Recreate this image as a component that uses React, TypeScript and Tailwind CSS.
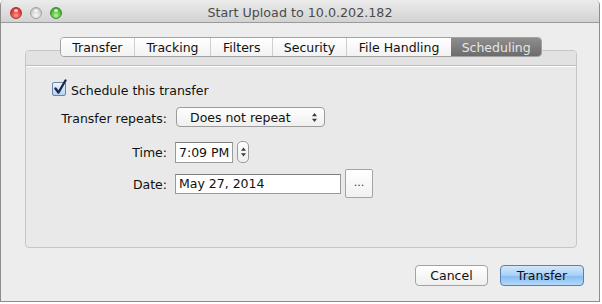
import React from "react";

const tabs = [
  { label: "Transfer", w: "w-[73px]" },
  { label: "Tracking", w: "w-[77px]" },
  { label: "Filters", w: "w-[62px]" },
  { label: "Security", w: "w-[74px]" },
  { label: "File Handling", w: "w-[106px]" },
  { label: "Scheduling", w: "w-[90px]", active: true },
];

function TrafficLight({ color }: { color: "red" | "gray" | "green" }) {
  const styles = {
    red: "bg-[radial-gradient(circle_at_50%_75%,#ff9a94_0%,#ec4c45_45%,#c0231d_100%)] border-[#a3302b]",
    gray: "bg-[radial-gradient(circle_at_50%_75%,#f8f8f8_0%,#dadada_45%,#b4b4b4_100%)] border-[#a2a2a2]",
    green: "bg-[radial-gradient(circle_at_50%_75%,#b9f5a2_0%,#5fc645_45%,#2f8f20_100%)] border-[#3f8a30]",
  };
  return (
    <div className={`relative w-[12px] h-[12px] rounded-full border ${styles[color]}`}>
      <div className="absolute left-[3px] top-[1px] w-[4px] h-[3px] rounded-full bg-white/70" />
    </div>
  );
}

function Checkbox() {
  return (
    <div className="relative w-[14px] h-[14px]">
      <div className="w-[14px] h-[14px] rounded-[2px] border border-[#6b84a8] bg-[linear-gradient(#eef5fe,#b4d2f2)]" />
      <svg className="absolute left-[1px] -top-[3px]" width="15" height="16" viewBox="0 0 15 16">
        <path d="M2.5 9.5 L5.5 13.5 L12.5 1.5" fill="none" stroke="#1c2a48" strokeWidth="2.4" strokeLinecap="round" strokeLinejoin="round" />
      </svg>
    </div>
  );
}

function UpDown({ h = 11 }: { h?: number }) {
  return (
    <svg width="7" height={h} viewBox="0 0 7 11">
      <path d="M3.5 1 L6 4.2 L1 4.2 Z" fill="#3a3a3a" />
      <path d="M3.5 10 L6 6.8 L1 6.8 Z" fill="#3a3a3a" />
    </svg>
  );
}

export default function App() {
  return (
    <div className="w-[602px] h-[304px] bg-white font-['DejaVu_Sans',sans-serif] text-[12.5px] text-[#111]">
      <div className="w-[600px] h-[302px] flex flex-col bg-[#ededed] border-l border-r border-b border-[#8c8c8c] rounded-t-[5px] overflow-hidden">
        {/* title bar */}
        <div className="relative h-[23px] shrink-0 flex items-center border-b border-[#9a9a9a] bg-[linear-gradient(#ececec,#d2d2d2)]">
          <div className="absolute left-[9px] top-[7px] flex gap-[8px]">
            <TrafficLight color="red" />
            <TrafficLight color="gray" />
            <TrafficLight color="green" />
          </div>
          <div className="w-full text-center text-[12.7px] text-[#4a4a4a] pt-[3px]">Start Upload to 10.0.202.182</div>
        </div>

        {/* tabs */}
        <div className="relative z-10 mt-[14px] ml-[59px] flex h-[20px] w-[482px] rounded-[4px] border border-[#a2a2a2] overflow-hidden">
          {tabs.map((t, i) => (
            <div
              key={t.label}
              className={`${t.w} h-full flex items-center justify-center pt-[2px] ${
                t.active
                  ? "bg-[linear-gradient(#8e8e8e,#6c6c6c)] text-[#e6e6e6]"
                  : "bg-[linear-gradient(#ffffff,#f2f2f2)] text-[#111]"
              } ${i > 0 && !t.active && !tabs[i - 1].active ? "border-l border-[#cfcfcf]" : ""}`}
            >
              {t.label}
            </div>
          ))}
        </div>

        {/* group box */}
        <div className="-mt-[7px] ml-[24px] w-[552px] h-[198px] shrink-0 rounded-[4px] border border-[#c6c6c6] bg-[#e9e9e9] flex flex-col overflow-hidden">
          <div className="h-[15px] shrink-0 bg-[#e2e2e2] border-b border-[#bdbdbd]" />
          <div className="h-[1px] shrink-0 bg-white" />

          <div className="mt-[15px] h-[14px] flex items-center pl-[26px]">
            <Checkbox />
            <span className="ml-[5px] pt-[4px]">Schedule this transfer</span>
          </div>

          <div className="mt-[11px] h-[20px] flex items-center">
            <div className="w-[141px] text-right pt-[4px]">Transfer repeats:</div>
            <div className="ml-[9px] w-[149px] h-[20px] rounded-[4px] border border-[#9c9c9c] bg-[linear-gradient(#ffffff,#efefef)] flex items-center pl-[13px] pr-[6px] justify-between">
              <span className="pt-[2px]">Does not repeat</span>
              <UpDown />
            </div>
          </div>

          <div className="mt-[14px] h-[22px] flex items-center">
            <div className="w-[141px] text-right pt-[3px]">Time:</div>
            <div className="ml-[8px] w-[58px] h-[21px] border border-[#9a9a9a] border-t-[#7e7e7e] bg-white flex items-center pl-[3px] pt-[2px]">
              7:09 PM
            </div>
            <div className="ml-[4px] w-[12px] h-[22px] rounded-[5px] border border-[#9c9c9c] bg-[linear-gradient(#ffffff,#eeeeee)] flex items-center justify-center">
              <UpDown h={14} />
            </div>
          </div>

          <div className="mt-[6px] h-[29px] flex items-center">
            <div className="w-[141px] text-right pt-[3px]">Date:</div>
            <div className="ml-[8px] w-[166px] h-[20px] border border-[#9a9a9a] border-t-[#7e7e7e] bg-white flex items-center pl-[3px] pt-[2px]">
              May 27, 2014
            </div>
            <div className="ml-[4px] w-[28px] h-[29px] rounded-[2px] border border-[#a4a4a4] bg-[linear-gradient(#ffffff,#f1f1f1)] flex items-center justify-center pb-[1px] text-[11px] text-[#333]">
              ...
            </div>
          </div>
        </div>

        {/* buttons */}
        <div className="mt-[17px] flex justify-end gap-[12px] pr-[15px]">
          <div className="w-[73px] h-[21px] rounded-[4px] border border-[#a3a3a3] bg-[linear-gradient(#ffffff,#efefef)] flex items-center justify-center pt-[2px]">
            Cancel
          </div>
          <div className="w-[84px] h-[21px] rounded-[4px] border border-[#5a7fb2] bg-[linear-gradient(#d3e7fb_0%,#a8cff6_50%,#86bbf0_52%,#b2d9fa_100%)] flex items-center justify-center pt-[2px]">
            Transfer
          </div>
        </div>
      </div>
    </div>
  );
}
